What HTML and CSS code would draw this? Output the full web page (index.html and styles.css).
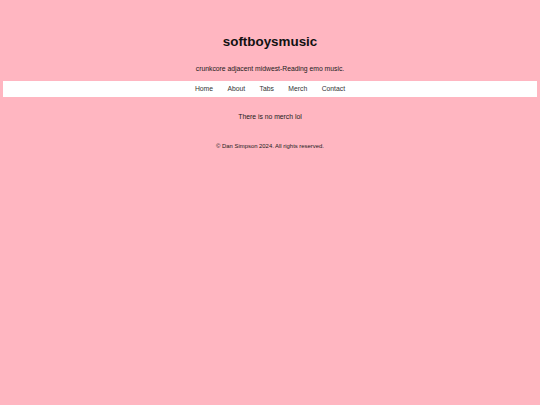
FILE: index.html
```html
<!DOCTYPE html>
<html lang="en">
<head>
<meta charset="utf-8">
<title>softboysmusic</title>
<link rel="stylesheet" href="styles.css">
</head>
<body>
<header class="site-header">
  <h1 class="site-title">softboysmusic</h1>
  <p class="tagline">crunkcore adjacent midwest-Reading emo music.</p>
</header>
<nav class="site-nav">
  <ul class="nav-list">
    <li><a href="#">Home</a></li>
    <li><a href="#">About</a></li>
    <li><a href="#">Tabs</a></li>
    <li><a href="#">Merch</a></li>
    <li><a href="#">Contact</a></li>
  </ul>
</nav>
<main class="content">
  <p class="message">There is no merch lol</p>
</main>
<footer class="site-footer">
  <p class="copyright">&copy; Dan Simpson 2024. All rights reserved.</p>
</footer>
</body>
</html>
```

FILE: styles.css
```css
html, body {
  background: #ffb6c1;
}
body {
  margin: 0;
  padding: 0 3px;
  font-family: "Liberation Sans", Arial, Helvetica, sans-serif;
  color: #333;
  text-align: center;
}
.site-header {
  padding-top: 33.5px;
}
.site-title {
  margin: 0;
  font-size: 13.4px;
  line-height: 15px;
  font-weight: bold;
  color: #111;
}
.tagline {
  margin: 16.5px 0 0;
  font-size: 6.8px;
  line-height: 8px;
  color: #1a1a1a;
}
.site-nav {
  margin-top: 8.1px;
  background: #fff;
}
.nav-list {
  margin: 0;
  padding: 0;
  list-style: none;
  display: flex;
  justify-content: center;
  gap: 14.4px;
  height: 16px;
  align-items: center;
}
.nav-list a {
  font-size: 6.8px;
  line-height: 16px;
  color: #333;
  text-decoration: none;
  display: block;
}
.content {
  padding-top: 15.6px;
}
.message {
  margin: 0;
  font-size: 6.8px;
  line-height: 8px;
  color: #1a1a1a;
}
.site-footer {
  padding-top: 22.6px;
}
.copyright {
  margin: 0;
  font-size: 5.9px;
  line-height: 7px;
  color: #1a1a1a;
}
```
